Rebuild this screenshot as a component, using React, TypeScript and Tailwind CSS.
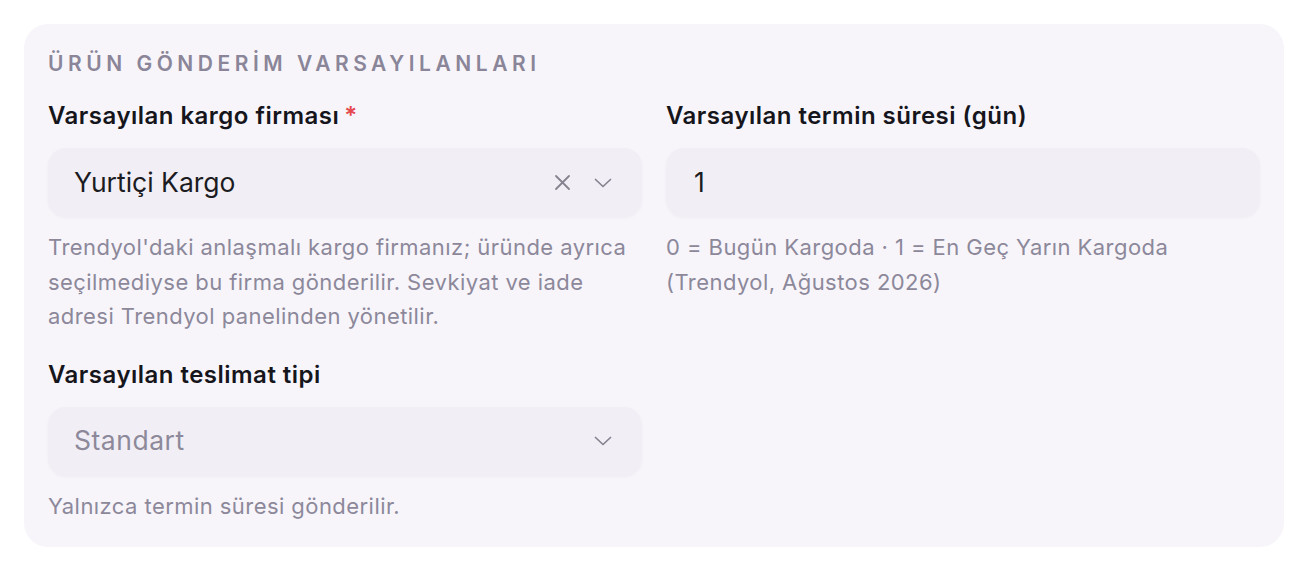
import React from "react";

const XIcon = () => (
  <svg width="17" height="17" viewBox="0 0 17 17" fill="none" stroke="#86828f" strokeWidth="1.8" strokeLinecap="round">
    <path d="M2 2 L15 15 M15 2 L2 15" />
  </svg>
);

const Chevron = () => (
  <svg width="18" height="10" viewBox="0 0 18 10" fill="none" stroke="#86828f" strokeWidth="1.7" strokeLinecap="round" strokeLinejoin="round">
    <path d="M1.5 1.5 L9 8.5 L16.5 1.5" />
  </svg>
);

const Label = ({ children, required }: { children: React.ReactNode; required?: boolean }) => (
  <div className="text-[24px] leading-[32px] font-semibold text-[#16151c] tracking-[0.02em]">
    {children}
    {required && <span className="text-[#e5484d] ml-[5px]">*</span>}
  </div>
);

const Help = ({ children }: { children: React.ReactNode }) => (
  <p className="mt-[13px] text-[22px] leading-[34.5px] text-[#8c889a] tracking-[0.02em]">{children}</p>
);

export default function App() {
  return (
    <div className="w-[1308px] h-[572px] bg-white pt-6 px-6" style={{ fontFamily: "Inter, 'Noto Sans', sans-serif" }}>
      <div className="rounded-[24px] bg-[#f7f5fa] p-6">
        <div className="text-[21px] leading-[32px] font-semibold tracking-[0.215em] text-[#8a8598]">
          ÜRÜN GÖNDERİM VARSAYILANLARI
        </div>
        <div className="mt-5 grid grid-cols-2 gap-x-6 gap-y-[25px]">
          <div>
            <Label required>Varsayılan kargo firması</Label>
            <div className="mt-4 h-[69px] rounded-[18px] bg-[#f1eff5] shadow-[0_1px_3px_rgba(40,30,80,0.04)] flex items-center pl-[26px] pr-[30px]">
              <span className="flex-1 text-[26.5px] text-[#1c1b22]">Yurtiçi Kargo</span>
              <div className="flex items-center gap-[23px]">
                <XIcon />
                <Chevron />
              </div>
            </div>
            <Help>
              Trendyol'daki anlaşmalı kargo firmanız; üründe ayrıca seçilmediyse bu firma gönderilir. Sevkiyat ve iade adresi Trendyol panelinden yönetilir.
            </Help>
          </div>
          <div>
            <Label>Varsayılan termin süresi (gün)</Label>
            <div className="mt-4 h-[69px] rounded-[18px] bg-[#f1eff5] shadow-[0_1px_3px_rgba(40,30,80,0.04)] flex items-center pl-[28px] pr-[30px]">
              <span className="text-[26.5px] text-[#1c1b22]">1</span>
            </div>
            <Help>
              0 = Bugün Kargoda · 1 = En Geç Yarın Kargoda
              <br />
              (Trendyol, Ağustos 2026)
            </Help>
          </div>
          <div>
            <Label>Varsayılan teslimat tipi</Label>
            <div className="mt-4 h-[69px] rounded-[18px] bg-[#f1eff5] shadow-[0_1px_3px_rgba(40,30,80,0.04)] flex items-center pl-[26px] pr-[30px]">
              <span className="flex-1 text-[26.5px] text-[#8d899a] tracking-[0.02em]">Standart</span>
              <Chevron />
            </div>
            <Help>Yalnızca termin süresi gönderilir.</Help>
          </div>
          <div />
        </div>
      </div>
    </div>
  );
}
